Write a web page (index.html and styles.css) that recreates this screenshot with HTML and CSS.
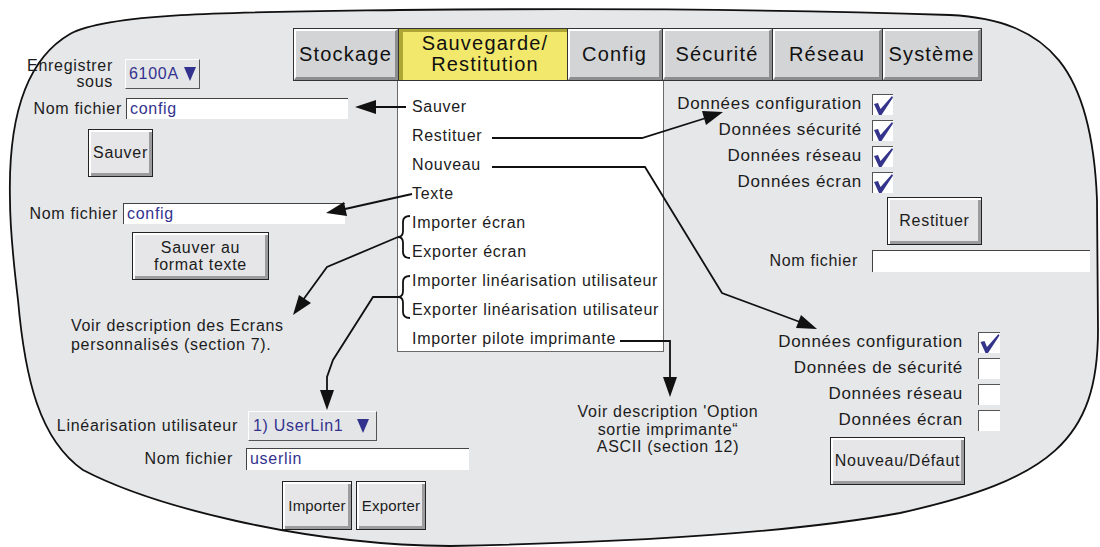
FILE: index.html
```html
<!DOCTYPE html>
<html lang="fr">
<head>
    <meta charset="UTF-8">
    <meta name="viewport" content="width=device-width, initial-scale=1.0">
    <title>Sauvegarde/Restitution</title>
    <link rel="stylesheet" href="styles.css">
</head>
<body>
    <div class="screen">
        <svg class="backdrop" width="1100" height="547" viewBox="0 0 1100 547">
            <path class="blob" d="M 10 200 C 8 120, 25 60, 70 34 C 110 12, 250 12, 400 10 C 600 8, 800 10, 950 15 C 1050 20, 1092 70, 1097 200 L 1098 330 C 1098 440, 1050 480, 900 513 C 780 535, 600 543, 450 546 C 300 545, 150 505, 83 470 C 40 440, 25 380, 18 300 C 12 250, 10 220, 10 200 Z"/>
        </svg>

        <div class="tabs">
            <div class="tab">Stockage</div>
            <div class="tab active">Sauvegarde/<br>Restitution</div>
            <div class="tab">Config</div>
            <div class="tab">Sécurité</div>
            <div class="tab">Réseau</div>
            <div class="tab">Système</div>
        </div>

        <ul class="menu">
            <li>Sauver</li>
            <li>Restituer</li>
            <li>Nouveau</li>
            <li>Texte</li>
            <li>Importer écran</li>
            <li>Exporter écran</li>
            <li>Importer linéarisation utilisateur</li>
            <li>Exporter linéarisation utilisateur</li>
            <li>Importer pilote imprimante</li>
        </ul>

        <!-- left column: save, text export, user linearisation -->
        <div class="block save-block">
            <div class="row row-sous">
                <span class="label">Enregistrer<br>sous</span>
                <div class="picker picker-small">6100A<span class="caret"></span></div>
            </div>
            <div class="row row-name">
                <span class="label">Nom fichier</span>
                <div class="entry">config</div>
            </div>
            <div class="btn btn-save">Sauver</div>
        </div>

        <div class="block text-block">
            <div class="row row-name">
                <span class="label">Nom fichier</span>
                <div class="entry">config</div>
            </div>
            <div class="btn btn-text">Sauver au<br>format texte</div>
        </div>

        <p class="block note note-screens">Voir description des Ecrans<br>personnalisés (section 7).</p>

        <div class="block lin-block">
            <div class="row row-lin">
                <span class="label">Linéarisation utilisateur</span>
                <div class="picker picker-wide">1) UserLin1<span class="caret"></span></div>
            </div>
            <div class="row row-name">
                <span class="label">Nom fichier</span>
                <div class="entry">userlin</div>
            </div>
            <div class="btn-row">
                <div class="btn btn-small">Importer</div>
                <div class="btn btn-small">Exporter</div>
            </div>
        </div>

        <p class="block note note-printer">Voir description 'Option<br>sortie imprimante“<br>ASCII (section 12)</p>

        <!-- right column: restore and new -->
        <div class="block restore-block">
            <div class="checks">
                <span>Données configuration</span>
                <div class="check"><svg width="20" height="20" viewBox="0 0 20 20"><polygon points="1,9 5,8 7.5,14 19,1 20,2.5 8.5,20 6,20"/></svg></div>
                <span>Données sécurité</span>
                <div class="check"><svg width="20" height="20" viewBox="0 0 20 20"><polygon points="1,9 5,8 7.5,14 19,1 20,2.5 8.5,20 6,20"/></svg></div>
                <span>Données réseau</span>
                <div class="check"><svg width="20" height="20" viewBox="0 0 20 20"><polygon points="1,9 5,8 7.5,14 19,1 20,2.5 8.5,20 6,20"/></svg></div>
                <span>Données écran</span>
                <div class="check"><svg width="20" height="20" viewBox="0 0 20 20"><polygon points="1,9 5,8 7.5,14 19,1 20,2.5 8.5,20 6,20"/></svg></div>
            </div>
            <div class="btn btn-restore">Restituer</div>
            <div class="row row-name">
                <span class="label">Nom fichier</span>
                <div class="entry"></div>
            </div>
        </div>

        <div class="block new-block">
            <div class="checks">
                <span>Données configuration</span>
                <div class="check"><svg width="21" height="20" viewBox="0 0 20 20"><polygon points="1,9 5,8 7.5,14 19,1 20,2.5 8.5,20 6,20"/></svg></div>
                <span>Données de sécurité</span>
                <div class="check"></div>
                <span>Données réseau</span>
                <div class="check"></div>
                <span>Données écran</span>
                <div class="check"></div>
            </div>
            <div class="btn btn-new">Nouveau/Défaut</div>
        </div>

        <svg class="overlay" width="1100" height="547" viewBox="0 0 1100 547">
            <!-- braces -->
            <path class="leader" d="M 410 216 Q 403 216 403 222 L 403 231 Q 403 237 398 237 Q 403 237 403 243 L 403 252 Q 403 258 410 258"/>
            <path class="leader" d="M 410 276 Q 403 276 403 282 L 403 291 Q 403 297 398 297 Q 403 297 403 303 L 403 312 Q 403 318 410 318"/>
            <!-- leaders -->
            <polyline class="leader" points="406,107 372,107"/>
            <polyline class="leader" points="492,138 642,138 706,118"/>
            <polyline class="leader" points="492,167 645,167 722,293 800,322"/>
            <polyline class="leader" points="412,194 345,209"/>
            <polyline class="leader" points="398,237 327,267 303,300"/>
            <polyline class="leader" points="398,297 373,297 333,360 327,377 327,392"/>
            <polyline class="leader" points="620,341 670,341 670,380"/>
            <!-- heads -->
            <polygon class="head" points="355,107 376,100 376,114"/>
            <polygon class="head" points="723,112 706,125 702,111"/>
            <polygon class="head" points="817,329 796,328 801,315"/>
            <polygon class="head" points="326,213 344,202 347,216"/>
            <polygon class="head" points="293,315 299,295 311,303"/>
            <polygon class="head" points="327,410 320,390 334,390"/>
            <polygon class="head" points="670,397 663,377 677,377"/>
        </svg>
    </div>
</body>
</html>
```

FILE: styles.css
```css
body {
    margin: 0;
    background: #fff;
    font-family: "Liberation Sans", Arial, sans-serif;
    font-size: 16px;
    letter-spacing: 0.7px;
    color: #1c1c1c;
}
.screen {
    position: relative;
    width: 1100px;
    height: 547px;
    overflow: hidden;
}
.backdrop, .overlay {
    position: absolute;
    left: 0;
    top: 0;
}
.overlay {
    z-index: 2;
    pointer-events: none;
}
.blob {
    fill: #e6e7e9;
    stroke: #111;
    stroke-width: 1.8;
}
.leader {
    fill: none;
    stroke: #111;
    stroke-width: 1.8;
}
.head {
    fill: #111;
}

/* tab bar */
.tabs {
    position: absolute;
    left: 293px;
    top: 28px;
    height: 53px;
    box-sizing: border-box;
    display: grid;
    grid-template-columns: 104px 168px 94px 109px 109px 98px;
    gap: 1px;
    background: #333;
    border: 1px solid #333;
}
.tab {
    display: flex;
    align-items: center;
    justify-content: center;
    text-align: center;
    background: #d3d4d6;
    border-top: 2px solid #fff;
    border-left: 2px solid #fff;
    border-right: 3px solid #8d8e90;
    border-bottom: 3px solid #8d8e90;
    font-size: 20px;
    line-height: 21px;
    letter-spacing: 1.2px;
    color: #111;
}
.tab.active {
    background: #f1e86c;
    border-top: 3px solid #aea634;
    border-left: 4px solid #aea634;
    border-right: 0;
    border-bottom: 0;
    padding-bottom: 5px;
}

/* drop-down menu */
.menu {
    position: absolute;
    left: 397px;
    top: 81px;
    width: 267px;
    height: 271px;
    box-sizing: border-box;
    margin: 0;
    padding: 11px 0 0 14px;
    list-style: none;
    background: #fff;
    border: 1px solid #6a6a6a;
    border-top: 0;
    line-height: 29px;
    z-index: 1;
}

/* common widgets */
.block {
    position: absolute;
    margin: 0;
}
.row {
    display: flex;
    align-items: center;
}
.label {
    flex: none;
    text-align: right;
}
.entry {
    box-sizing: border-box;
    width: 222px;
    height: 21px;
    padding-left: 3px;
    background: #fff;
    border-top: 1px solid #444;
    border-left: 1px solid #444;
    color: #33338f;
    line-height: 20px;
}
.picker {
    box-sizing: border-box;
    display: flex;
    align-items: center;
    justify-content: space-between;
    height: 30px;
    background: #e4e5e7;
    border: 1px solid;
    border-color: #fff #555 #555 #fff;
    color: #33338f;
}
.caret {
    width: 0;
    height: 0;
    border-left: 6px solid transparent;
    border-right: 6px solid transparent;
    border-top: 14px solid #33338f;
}
.btn {
    box-sizing: border-box;
    display: flex;
    align-items: center;
    justify-content: center;
    text-align: center;
    background: #e6e6e8;
    border: 1px solid #222;
    box-shadow: inset 2px 2px 0 #fff, inset -3px -3px 0 #9c9c9e;
}
.check {
    box-sizing: border-box;
    width: 21px;
    height: 21px;
    background: #fff;
    border-top: 1px solid #555;
    border-left: 1px solid #555;
}
.check svg {
    display: block;
    fill: #34348c;
}
.note {
    line-height: 19px;
}

/* save */
.save-block {
    left: 0;
    top: 58px;
}
.save-block .row-sous {
    gap: 12px;
}
.save-block .row-sous .label {
    width: 113px;
    line-height: 16px;
}
.picker-small {
    width: 75px;
    padding: 0 3px 0 3px;
}
.save-block .row-name {
    gap: 4px;
    margin-top: 8px;
}
.save-block .row-name .label {
    width: 122px;
}
.btn-save {
    width: 65px;
    height: 48px;
    margin: 10px 0 0 88px;
}

/* text export */
.text-block {
    left: 0;
    top: 203px;
}
.text-block .row-name {
    gap: 5px;
}
.text-block .label {
    width: 118px;
}
.btn-text {
    width: 137px;
    height: 48px;
    margin: 8px 0 0 132px;
    line-height: 17px;
}
.note-screens {
    left: 71px;
    top: 316px;
}

/* user linearisation */
.lin-block {
    left: 0;
    top: 411px;
}
.row-lin {
    gap: 10px;
}
.row-lin .label {
    width: 238px;
}
.picker-wide {
    width: 129px;
    padding: 0 7px 0 4px;
}
.lin-block .row-name {
    gap: 13px;
    margin-top: 7px;
}
.lin-block .row-name .label {
    width: 233px;
}
.lin-block .entry {
    width: 223px;
    height: 22px;
}
.btn-row {
    display: flex;
    gap: 4px;
    margin: 11px 0 0 282px;
}
.btn-small {
    width: 70px;
    height: 49px;
    font-size: 15px;
    letter-spacing: 0.2px;
}
.note-printer {
    left: 560px;
    top: 403px;
    width: 216px;
    text-align: center;
    line-height: 17.5px;
}

/* restore */
.checks {
    display: grid;
    grid-auto-rows: 26px;
    align-items: center;
    justify-items: end;
    font-size: 17px;
}
.restore-block {
    left: 600px;
    top: 91px;
}
.restore-block .checks {
    grid-template-columns: 262px 21px;
    column-gap: 10px;
}
.btn-restore {
    width: 95px;
    height: 48px;
    margin: 2px 0 0 287px;
}
.restore-block .row-name {
    gap: 14px;
    margin-top: 5px;
}
.restore-block .row-name .label {
    width: 258px;
}
.restore-block .entry {
    width: 218px;
    height: 22px;
}

/* new / default */
.new-block {
    left: 600px;
    top: 329px;
}
.new-block .checks {
    grid-template-columns: 363px 22px;
    column-gap: 15px;
}
.new-block .check {
    width: 22px;
}
.btn-new {
    width: 135px;
    height: 48px;
    margin: 4px 0 0 230px;
}
```
